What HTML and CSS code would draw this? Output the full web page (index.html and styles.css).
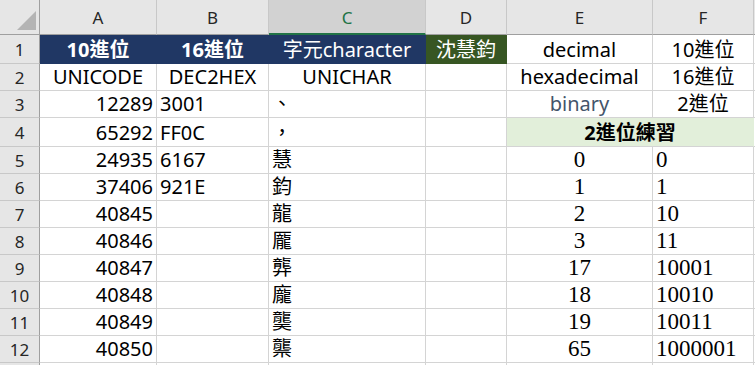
FILE: index.html
```html
<!DOCTYPE html>
<html lang="zh-Hant">
<head>
<meta charset="utf-8">
<title>Sheet</title>
<link rel="stylesheet" href="styles.css">
</head>
<body>
<div class="sheet">
  <div class="corner"><svg class="tri" width="40" height="35" viewBox="0 0 40 35"><polygon points="36,11 36,30 17,30" fill="#b4b4b4"/></svg></div>
  <div class="ch">A</div>
  <div class="ch">B</div>
  <div class="ch sel">C</div>
  <div class="ch">D</div>
  <div class="ch">E</div>
  <div class="ch">F</div>
  <div class="ch last"></div>

  <div class="rh">1</div>
  <div class="c navy bold center">10進位</div>
  <div class="c navy bold center">16進位</div>
  <div class="c navy center">字元character</div>
  <div class="c green center">沈慧鈞</div>
  <div class="c center">decimal</div>
  <div class="c center">10進位</div>
  <div class="c"></div>

  <div class="rh">2</div>
  <div class="c center">UNICODE</div>
  <div class="c center">DEC2HEX</div>
  <div class="c center">UNICHAR</div>
  <div class="c"></div>
  <div class="c center">hexadecimal</div>
  <div class="c center">16進位</div>
  <div class="c"></div>

  <div class="rh">3</div>
  <div class="c right">12289</div>
  <div class="c">3001</div>
  <div class="c">、</div>
  <div class="c"></div>
  <div class="c center muted">binary</div>
  <div class="c center">2進位</div>
  <div class="c"></div>

  <div class="rh">4</div>
  <div class="c right">65292</div>
  <div class="c">FF0C</div>
  <div class="c">，</div>
  <div class="c"></div>
  <div class="c mint bold center span2">2進位練習</div>
  <div class="c"></div>

  <div class="rh">5</div>
  <div class="c right">24935</div>
  <div class="c">6167</div>
  <div class="c">慧</div>
  <div class="c"></div>
  <div class="c center serif">0</div>
  <div class="c serif">0</div>
  <div class="c"></div>

  <div class="rh">6</div>
  <div class="c right">37406</div>
  <div class="c">921E</div>
  <div class="c">鈞</div>
  <div class="c"></div>
  <div class="c center serif">1</div>
  <div class="c serif">1</div>
  <div class="c"></div>

  <div class="rh">7</div>
  <div class="c right">40845</div>
  <div class="c"></div>
  <div class="c">龍</div>
  <div class="c"></div>
  <div class="c center serif">2</div>
  <div class="c serif">10</div>
  <div class="c"></div>

  <div class="rh">8</div>
  <div class="c right">40846</div>
  <div class="c"></div>
  <div class="c">龎</div>
  <div class="c"></div>
  <div class="c center serif">3</div>
  <div class="c serif">11</div>
  <div class="c"></div>

  <div class="rh">9</div>
  <div class="c right">40847</div>
  <div class="c"></div>
  <div class="c">龏</div>
  <div class="c"></div>
  <div class="c center serif">17</div>
  <div class="c serif">10001</div>
  <div class="c"></div>

  <div class="rh">10</div>
  <div class="c right">40848</div>
  <div class="c"></div>
  <div class="c">龐</div>
  <div class="c"></div>
  <div class="c center serif">18</div>
  <div class="c serif">10010</div>
  <div class="c"></div>

  <div class="rh">11</div>
  <div class="c right">40849</div>
  <div class="c"></div>
  <div class="c">龑</div>
  <div class="c"></div>
  <div class="c center serif">19</div>
  <div class="c serif">10011</div>
  <div class="c"></div>

  <div class="rh">12</div>
  <div class="c right">40850</div>
  <div class="c"></div>
  <div class="c">龒</div>
  <div class="c"></div>
  <div class="c center serif">65</div>
  <div class="c serif">1000001</div>
  <div class="c"></div>

  <div class="rh tail"></div>
  <div class="c tail"></div>
  <div class="c tail"></div>
  <div class="c tail"></div>
  <div class="c tail"></div>
  <div class="c tail"></div>
  <div class="c tail"></div>
  <div class="c tail"></div>
</div>
</body>
</html>
```

FILE: styles.css
```css
* { box-sizing: border-box; }
html, body { margin: 0; padding: 0; background: #ffffff; }
body { width: 755px; height: 365px; overflow: hidden; }

.sheet {
  display: grid;
  grid-template-columns: 40px 117px 112px 157px 81px 146px 101px 1fr;
  grid-template-rows: 35px 29px 27px 27px 29px repeat(8, 27px) 2px;
  font-family: "Noto Sans", "Noto Sans CJK TC", sans-serif;
  font-size: 20px;
  color: #000;
}

.corner {
  background: #e6e6e6;
  border-right: 1px solid #9f9f9f;
  border-bottom: 1px solid #9f9f9f;
}
.tri { display: block; }

.ch {
  background: #e6e6e6;
  border-right: 1px solid #c8c8c8;
  border-bottom: 1px solid #9f9f9f;
  display: flex;
  align-items: center;
  justify-content: center;
  font-size: 17px;
  color: #262626;
  padding-top: 1px;
}
.ch.sel {
  background: #d2d2d2;
  color: #217346;
  border-bottom: 2px solid #217346;
}
.ch.last { border-right: none; }

.rh {
  background: #e6e6e6;
  border-right: 1px solid #9f9f9f;
  border-bottom: 1px solid #c8c8c8;
  display: flex;
  align-items: center;
  justify-content: center;
  font-size: 17px;
  color: #262626;
}

.c {
  border-right: 1px solid #d4d4d4;
  border-bottom: 1px solid #d4d4d4;
  display: flex;
  align-items: flex-end;
  justify-content: flex-start;
  padding: 0 3px 3px 3px;
  line-height: 20px;
  white-space: nowrap;
}
.tail, .rh.tail { padding: 0; border-bottom: none; }
.center { justify-content: center; }
.right { justify-content: flex-end; }
.bold { font-weight: 700; }
.serif { font-family: "Liberation Serif", "Noto Sans CJK TC", serif; font-size: 23px; }
.muted { color: #44546a; }

.navy { background: #203764; color: #ffffff; border-color: #203764; }
.green { background: #375623; color: #ffffff; border-color: #375623; }
.mint { background: #e2efda; border-color: #e2efda; border-bottom-color: #d4d4d4; }
.span2 { grid-column: span 2; }
```
